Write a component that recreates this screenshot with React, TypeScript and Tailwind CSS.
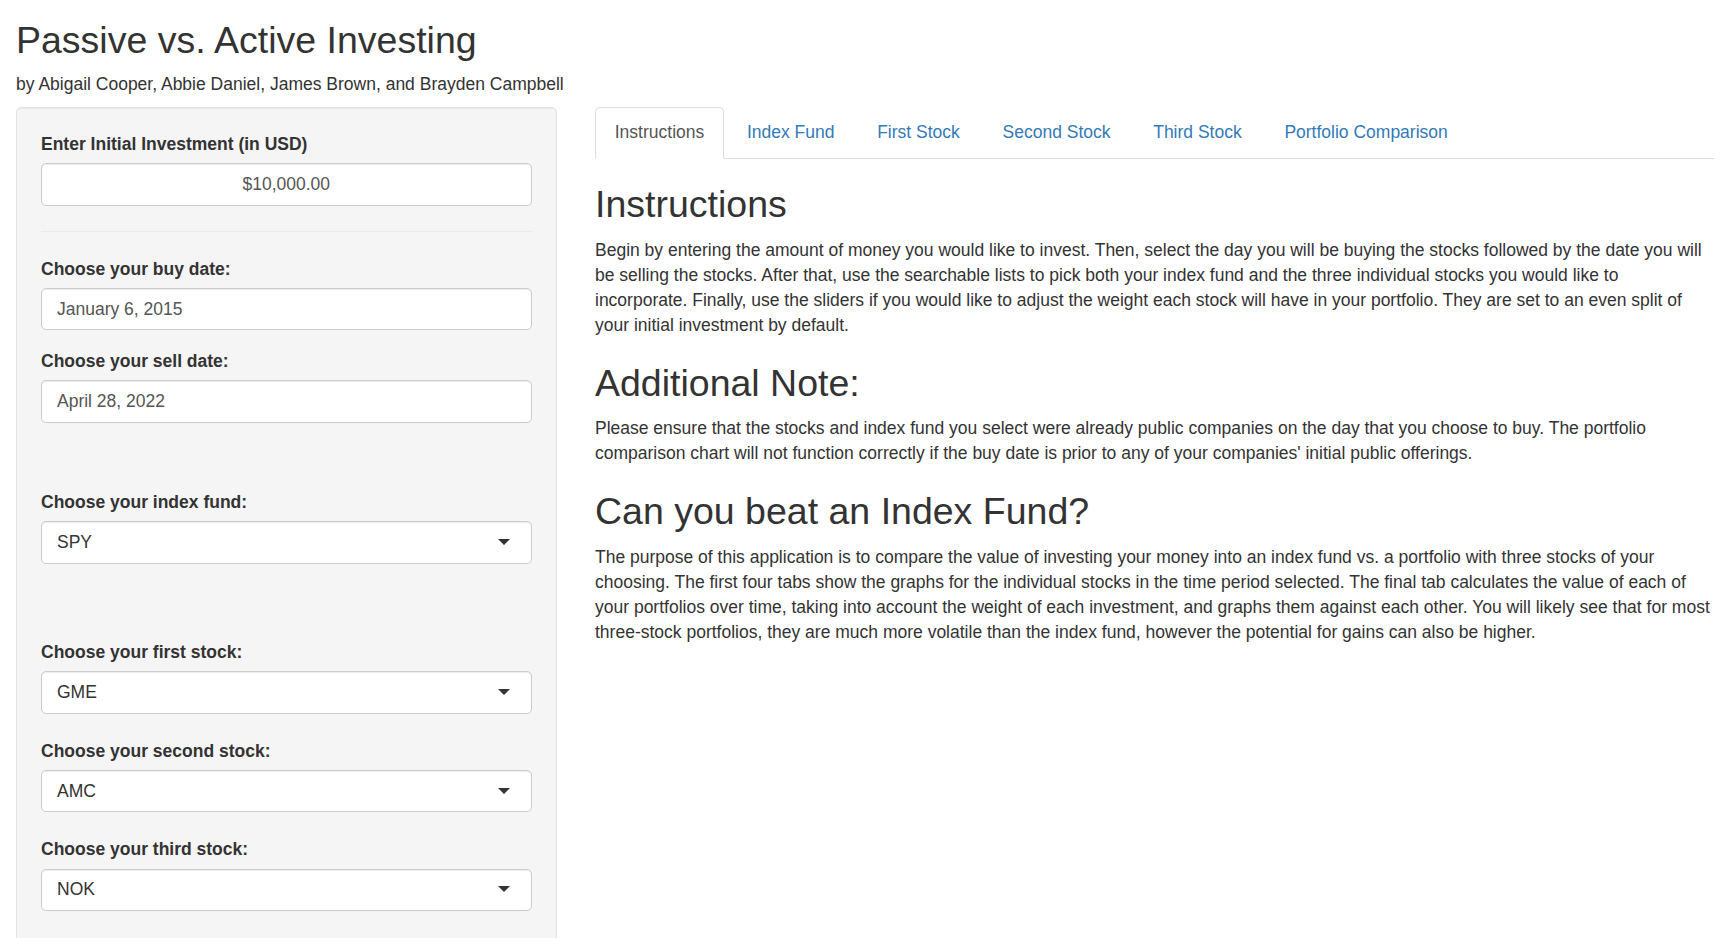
import React from "react";

function Caret() {
  return (
    <span className="block w-0 h-0 -mt-[1px] border-l-[6.25px] border-r-[6.25px] border-t-[6.25px] border-l-transparent border-r-transparent border-t-[#333]" />
  );
}

function TextBox({ value, center }: { value: string; center?: boolean }) {
  return (
    <div
      className={
        "h-[42.5px] bg-white border border-[#ccc] rounded-[5px] px-[15px] flex items-center text-[#555] shadow-[inset_0_1px_1px_rgba(0,0,0,0.075)] " +
        (center ? "justify-center" : "justify-start")
      }
    >
      {value}
    </div>
  );
}

function SelectBox({ value }: { value: string }) {
  return (
    <div className="h-[42.5px] bg-white border border-[#ccc] rounded-[5px] pl-[15px] pr-[21px] flex items-center justify-between text-[#333] shadow-[inset_0_1px_1px_rgba(0,0,0,0.075)]">
      <span>{value}</span>
      <Caret />
    </div>
  );
}

function Label({ children }: { children: React.ReactNode }) {
  return <div className="font-bold leading-[25px] mb-[6.25px]">{children}</div>;
}

const tabs = [
  "Instructions",
  "Index Fund",
  "First Stock",
  "Second Stock",
  "Third Stock",
  "Portfolio Comparison",
];

export default function App() {
  return (
    <div className="w-full min-h-screen bg-white text-[#333] text-[17.5px] leading-[25px] font-['Liberation_Sans',Arial,sans-serif] pl-[16px] pr-[14px] overflow-hidden">
      <h2 className="mt-[20px] mb-[11px] text-[37.5px] leading-[41.25px] font-normal">
        Passive vs. Active Investing
      </h2>
      <div>by Abigail Cooper, Abbie Daniel, James Brown, and Brayden Campbell</div>

      <div className="flex mt-[9.5px] gap-[38.5px]">
        {/* Sidebar */}
        <div className="w-[540.5px] shrink-0 bg-[#f5f5f5] border border-[#e3e3e3] rounded-[5px] p-[24px] shadow-[inset_0_1px_1px_rgba(0,0,0,0.05)] h-[900px]">
          <Label>Enter Initial Investment (in USD)</Label>
          <TextBox value="$10,000.00" center />
          <div className="my-[25px] border-t border-[#eaeaea]" />

          <Label>Choose your buy date:</Label>
          <TextBox value="January 6, 2015" />
          <div className="h-[18.75px]" />

          <Label>Choose your sell date:</Label>
          <TextBox value="April 28, 2022" />
          <div className="h-[67px]" />

          <Label>Choose your index fund:</Label>
          <SelectBox value="SPY" />
          <div className="h-[76.25px]" />

          <Label>Choose your first stock:</Label>
          <SelectBox value="GME" />
          <div className="h-[25px]" />

          <Label>Choose your second stock:</Label>
          <SelectBox value="AMC" />
          <div className="h-[25px]" />

          <Label>Choose your third stock:</Label>
          <SelectBox value="NOK" />
        </div>

        {/* Main panel */}
        <div className="flex-1 min-w-0">
          <div className="flex border-b border-[#ddd]">
            {tabs.map((t, i) => (
              <div
                key={t}
                className={
                  "px-[18.75px] py-[12.5px] leading-[25px] mr-[3.2px] -mb-[1px] rounded-t-[5px] border " +
                  (i === 0
                    ? "bg-white border-[#ddd] border-b-transparent text-[#555]"
                    : "border-transparent text-[#337ab7]")
                }
              >
                {t}
              </div>
            ))}
          </div>

          <div>
            <h2 className="mt-[25px] mb-[12.5px] text-[37.5px] leading-[41.25px] font-normal">
              Instructions
            </h2>
            <p className="m-0">
              Begin by entering the amount of money you would like to invest. Then, select the day
              you will be buying the stocks followed by the date you will be selling the stocks.
              After that, use the searchable lists to pick both your index fund and the three
              individual stocks you would like to incorporate. Finally, use the sliders if you would
              like to adjust the weight each stock will have in your portfolio. They are set to an
              even split of your initial investment by default.
            </p>
            <h2 className="mt-[25px] mb-[12.5px] text-[37.5px] leading-[41.25px] font-normal">
              Additional Note:
            </h2>
            <p className="m-0">
              Please ensure that the stocks and index fund you select were already public companies
              on the day that you choose to buy. The portfolio comparison chart will not function
              correctly if the buy date is prior to any of your companies' initial public offerings.
            </p>
            <h2 className="mt-[25px] mb-[12.5px] text-[37.5px] leading-[41.25px] font-normal">
              Can you beat an Index Fund?
            </h2>
            <p className="m-0">
              The purpose of this application is to compare the value of investing your money into
              an index fund vs. a portfolio with three stocks of your choosing. The first four tabs
              show the graphs for the individual stocks in the time period selected. The final tab
              calculates the value of each of your portfolios over time, taking into account the
              weight of each investment, and graphs them against each other. You will likely see
              that for most three-stock portfolios, they are much more volatile than the index fund,
              however the potential for gains can also be higher.
            </p>
          </div>
        </div>
      </div>
    </div>
  );
}
